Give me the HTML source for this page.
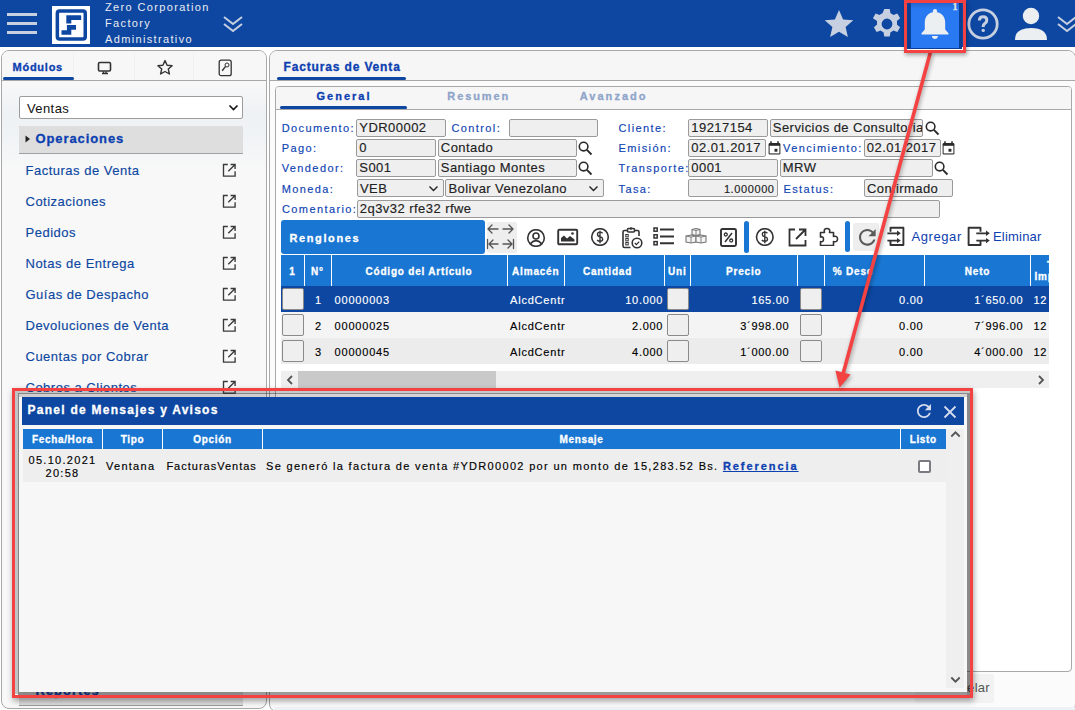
<!DOCTYPE html>
<html><head><meta charset="utf-8">
<style>
*{box-sizing:border-box;margin:0;padding:0}
html,body{width:1075px;height:710px;overflow:hidden;background:#fff;font-family:"Liberation Sans",sans-serif}
.a{position:absolute}
.t{position:absolute;white-space:nowrap;line-height:1}
#hdr{left:0;top:0;width:1075px;height:47px;background:#0d47a1}
.hb{left:7px;width:30px;height:3px;background:#c6d0e0}
.htx{left:105px;color:#e9ecf2;font-size:11px;letter-spacing:1.35px}
#lp{left:1px;top:50px;width:266px;height:659px;background:#f8f8f8;border:1px solid #a8a8a8;border-radius:8px;overflow:hidden}
#rp{left:269px;top:50px;width:807px;height:662px;background:#fbfbfb;border:1px solid #a8a8a8;border-radius:8px;overflow:hidden}
.li{left:25.5px;color:#0d47a1;font-size:13px;letter-spacing:0.5px}
.lbl{color:#0d43b2;font-size:11px;letter-spacing:1.4px}
.inp{position:absolute;background:#efefef;border:1px solid #9a9a9a;border-radius:2px;height:17px}
.itx{position:absolute;white-space:nowrap;line-height:1;color:#222;font-size:13px}
.th{position:absolute;color:#fff;font-weight:bold;font-size:10px;letter-spacing:0.8px;white-space:nowrap;line-height:1;text-align:center}
.td{position:absolute;white-space:nowrap;line-height:1;color:#000;font-size:11px;letter-spacing:0.9px}
.cb{position:absolute;width:22px;height:22px;background:#efefef;border:1px solid #8a8a8a;border-radius:2px}
.td,.itx,.lbl,.li{-webkit-text-stroke:0.15px currentColor}
[style*="font-weight:bold"],.th,b{-webkit-text-stroke:0.3px currentColor}
</style></head><body>
<!-- HEADER -->
<div id="hdr" class="a"></div>
<div class="a hb" style="top:13px"></div>
<div class="a hb" style="top:22px"></div>
<div class="a hb" style="top:31px"></div>
<svg class="a" style="left:52px;top:6px" width="38" height="38" viewBox="0 0 38 38">
<rect x="0" y="0" width="38" height="38" fill="#fff"/>
<rect x="5.35" y="5.05" width="27.9" height="27.9" rx="2.2" fill="none" stroke="#0d47a1" stroke-width="3.5"/>
<path d="M14.3 9.2h14.3q0.6 0 0.6 0.6v3.6q0 0.6-0.6 0.6h-9.3v3.5h-5z" fill="#0d47a1"/>
<path d="M14.9 19h9.1v4.7h-4.7v5.1h-9.8v-4.5h5.4z" fill="#0d47a1"/>
</svg>
<div class="t htx" style="top:2px">Zero Corporation</div>
<div class="t htx" style="top:18px">Factory</div>
<div class="t htx" style="top:34px">Administrativo</div>
<svg class="a" style="left:222px;top:15px" width="22" height="18" viewBox="0 0 22 18"><path d="M2 2l9 7 9-7M2 9l9 7 9-7" fill="none" stroke="#c6d0e0" stroke-width="2"/></svg>

<svg class="a" style="left:823px;top:9px;" width="32" height="29" viewBox="0 0 32 29"><path d="M16 1l4.1 9.4 10.2.9-7.7 6.8 2.3 10-8.9-5.3-8.9 5.3 2.3-10L1.7 11.3l10.2-.9z" fill="#c6d0e0"/></svg>
<svg class="a" style="left:871px;top:8px;" width="32" height="32" viewBox="0 0 32 32"><path d="M13.3 1h5.4l.8 4.2a11 11 0 0 1 2.9 1.7l4-1.4 2.7 4.7-3.2 2.8a11 11 0 0 1 0 3.4l3.2 2.8-2.7 4.7-4-1.4a11 11 0 0 1-2.9 1.7l-.8 4.2h-5.4l-.8-4.2a11 11 0 0 1-2.9-1.7l-4 1.4-2.7-4.7 3.2-2.8a11 11 0 0 1 0-3.4L1.9 10.2l2.7-4.7 4 1.4a11 11 0 0 1 2.9-1.7z M16 10.6a5.4 5.4 0 1 0 0 10.8 5.4 5.4 0 1 0 0-10.8z" fill="#c6d0e0" fill-rule="evenodd"/></svg>
<div class="a" style="left:907px;top:0px;width:55px;height:49px;background:#0b3f94"></div>
<div class="a" style="left:911px;top:3px;width:48px;height:45px;background:linear-gradient(to bottom,#2466d2 0px,#2979f2 6px,#2979f2 100%)"></div>
<svg class="a" style="left:920px;top:8px" width="30" height="32" viewBox="0 0 30 32"><circle cx="15" cy="3.2" r="2.1" fill="#eceff1"/><path d="M15 4C8.8 4 4.8 8.5 4.8 14.5V21.5L1.5 25.3Q0.9 26.5 2.2 26.5H27.8Q29.1 26.5 28.5 25.3L25.2 21.5V14.5C25.2 8.5 21.2 4 15 4Z" fill="#eceff1"/><path d="M11.8 28h6.2q-.5 2.9-3.1 2.9t-3.1-2.9z" fill="#eceff1"/></svg>
<div class="t" style="left:952.5px;top:2.3px;font-family:'Liberation Serif',serif;font-size:10px;font-weight:bold;color:#dfe6e0">1</div>
<svg class="a" style="left:966px;top:7px" width="34" height="34" viewBox="0 0 34 34"><circle cx="17" cy="17" r="14.2" fill="none" stroke="#c6d0e0" stroke-width="2.8"/><path d="M13.4 13.6q0-3.9 3.7-3.9t3.7 3.6q0 2-2 3.3-1.6 1-1.6 2.7v.7" fill="none" stroke="#c6d0e0" stroke-width="3"/><circle cx="17.2" cy="23.4" r="1.7" fill="#c6d0e0"/></svg>
<svg class="a" style="left:1014px;top:7px;" width="34" height="34" viewBox="0 0 34 34"><circle cx="17" cy="9" r="8.2" fill="#eceff1"/><path d="M1 33q0-12 16-12t16 12z" fill="#eceff1"/></svg>
<svg class="a" style="left:1056px;top:15px;" width="20" height="18" viewBox="0 0 20 18"><path d="M2 2l9 7 9-7M2 9l9 7 9-7" fill="none" stroke="#c6d0e0" stroke-width="2"/></svg>
<!-- LEFT PANEL -->
<div id="lp" class="a"></div>
<div class="a" style="left:2px;top:51px;width:264px;height:29px;background:#f7f7f7;border-radius:7px 7px 0 0"></div>
<div class="a" style="left:73px;top:52px;width:1px;height:28px;background:#f0f0f0"></div>
<div class="a" style="left:134px;top:52px;width:1px;height:28px;background:#f0f0f0"></div>
<div class="a" style="left:193px;top:52px;width:1px;height:28px;background:#f0f0f0"></div>
<div class="a" style="left:2px;top:80px;width:264px;height:1px;background:#a8a8a8"></div>
<div class="a" style="left:3px;top:77px;width:71px;height:3px;background:#0d47a1;border-radius:2px"></div>
<div class="t" style="left:12.5px;top:62px;font-size:11px;font-weight:bold;color:#0c40b0;letter-spacing:0.75px">Módulos</div>
<svg class="a" style="left:97px;top:61px" width="16" height="14" viewBox="0 0 16 14"><rect x="1.5" y="1.5" width="12" height="8.5" rx="1.2" fill="none" stroke="#333" stroke-width="1.6"/><path d="M6.5 10.5v1.5M9 10.5v1.5M5 12.5h6" stroke="#333" stroke-width="1.4"/></svg>
<svg class="a" style="left:156px;top:59px" width="18" height="18" viewBox="0 0 18 18"><path d="M9 1.6l2.1 4.6 5 .5-3.8 3.4 1.1 4.9L9 12.5 4.6 15l1.1-4.9L1.9 6.7l5-.5z" fill="none" stroke="#333" stroke-width="1.4" stroke-linejoin="round"/></svg>
<svg class="a" style="left:218px;top:59px" width="15" height="18" viewBox="0 0 15 18"><rect x="1.2" y="1.2" width="12" height="15.5" rx="2" fill="none" stroke="#333" stroke-width="1.3"/><circle cx="9" cy="6" r="2" fill="none" stroke="#333" stroke-width="1"/><path d="M7.6 7.4L4.2 11.8" stroke="#333" stroke-width="1.4"/></svg>
<div class="a" style="left:2px;top:81px;width:264px;height:90px;background:linear-gradient(to bottom,#f8f8f8 0%,#eff2f5 35%,#f0f3f6 60%,#f8f8f8 100%)"></div>
<div class="a" style="left:19px;top:96px;width:224px;height:23px;background:#fff;border:1px solid #9c9c9c;border-radius:2px"></div>
<div class="t" style="left:27px;top:102px;font-size:13px;color:#111;letter-spacing:0.4px">Ventas</div>
<svg class="a" style="left:228px;top:103px" width="11" height="9" viewBox="0 0 11 9"><path d="M1.5 2.5l4 4 4-4" fill="none" stroke="#111" stroke-width="1.6"/></svg>
<div class="a" style="left:19px;top:126px;width:224px;height:28px;background:#dedede;border-bottom:1px solid #a0a0a0"></div>
<svg class="a" style="left:25px;top:135px" width="6" height="8" viewBox="0 0 6 8"><path d="M0.5 0.5L5 4 0.5 7.5z" fill="#222"/></svg>
<div class="t" style="left:35.5px;top:132px;font-size:13px;font-weight:bold;color:#0c40b0;letter-spacing:0.9px">Operaciones</div>
<div class="t li" style="top:164.0px">Facturas de Venta</div>
<svg class="a" style="left:222px;top:163px" width="14" height="14" viewBox="0 0 14 14"><path d="M5.8 1.5H1.5v11.6h11.6V8.2" fill="none" stroke="#3a3a3a" stroke-width="1.35"/><path d="M6.3 8.3L12.6 2M8.6 1.5h4.5V6" fill="none" stroke="#3a3a3a" stroke-width="1.35"/></svg>
<div class="t li" style="top:195.0px">Cotizaciones</div>
<svg class="a" style="left:222px;top:194px" width="14" height="14" viewBox="0 0 14 14"><path d="M5.8 1.5H1.5v11.6h11.6V8.2" fill="none" stroke="#3a3a3a" stroke-width="1.35"/><path d="M6.3 8.3L12.6 2M8.6 1.5h4.5V6" fill="none" stroke="#3a3a3a" stroke-width="1.35"/></svg>
<div class="t li" style="top:226.0px">Pedidos</div>
<svg class="a" style="left:222px;top:225px" width="14" height="14" viewBox="0 0 14 14"><path d="M5.8 1.5H1.5v11.6h11.6V8.2" fill="none" stroke="#3a3a3a" stroke-width="1.35"/><path d="M6.3 8.3L12.6 2M8.6 1.5h4.5V6" fill="none" stroke="#3a3a3a" stroke-width="1.35"/></svg>
<div class="t li" style="top:257.0px">Notas de Entrega</div>
<svg class="a" style="left:222px;top:256px" width="14" height="14" viewBox="0 0 14 14"><path d="M5.8 1.5H1.5v11.6h11.6V8.2" fill="none" stroke="#3a3a3a" stroke-width="1.35"/><path d="M6.3 8.3L12.6 2M8.6 1.5h4.5V6" fill="none" stroke="#3a3a3a" stroke-width="1.35"/></svg>
<div class="t li" style="top:288.0px">Guías de Despacho</div>
<svg class="a" style="left:222px;top:287px" width="14" height="14" viewBox="0 0 14 14"><path d="M5.8 1.5H1.5v11.6h11.6V8.2" fill="none" stroke="#3a3a3a" stroke-width="1.35"/><path d="M6.3 8.3L12.6 2M8.6 1.5h4.5V6" fill="none" stroke="#3a3a3a" stroke-width="1.35"/></svg>
<div class="t li" style="top:319.0px">Devoluciones de Venta</div>
<svg class="a" style="left:222px;top:318px" width="14" height="14" viewBox="0 0 14 14"><path d="M5.8 1.5H1.5v11.6h11.6V8.2" fill="none" stroke="#3a3a3a" stroke-width="1.35"/><path d="M6.3 8.3L12.6 2M8.6 1.5h4.5V6" fill="none" stroke="#3a3a3a" stroke-width="1.35"/></svg>
<div class="t li" style="top:350.0px">Cuentas por Cobrar</div>
<svg class="a" style="left:222px;top:349px" width="14" height="14" viewBox="0 0 14 14"><path d="M5.8 1.5H1.5v11.6h11.6V8.2" fill="none" stroke="#3a3a3a" stroke-width="1.35"/><path d="M6.3 8.3L12.6 2M8.6 1.5h4.5V6" fill="none" stroke="#3a3a3a" stroke-width="1.35"/></svg>
<div class="t li" style="top:381.0px">Cobros a Clientes</div>
<svg class="a" style="left:222px;top:380px" width="14" height="14" viewBox="0 0 14 14"><path d="M5.8 1.5H1.5v11.6h11.6V8.2" fill="none" stroke="#3a3a3a" stroke-width="1.35"/><path d="M6.3 8.3L12.6 2M8.6 1.5h4.5V6" fill="none" stroke="#3a3a3a" stroke-width="1.35"/></svg>
<div class="a" style="left:19px;top:676px;width:224px;height:30px;background:#dedede;border-bottom:1px solid #9c9c9c"></div>
<svg class="a" style="left:25px;top:685px" width="6" height="8" viewBox="0 0 6 8"><path d="M0.5 0.5L5 4 0.5 7.5z" fill="#222"/></svg>
<div class="t" style="left:35.5px;top:683.5px;font-size:13px;font-weight:bold;color:#0c40b0;letter-spacing:1.0px">Reportes</div>

<!-- RIGHT PANEL -->
<div id="rp" class="a"></div>
<div class="a" style="left:274px;top:707px;width:801px;height:3px;background:#eef1f5"></div>
<div class="a" style="left:270px;top:51px;width:805px;height:29px;background:#f6f6f6;border-radius:7px 7px 0 0"></div>
<div class="a" style="left:270px;top:80px;width:805px;height:1px;background:#a8a8a8"></div>
<div class="t" style="left:283.5px;top:60.84px;font-size:12px;font-weight:bold;color:#0c40b0;letter-spacing:0.85px">Facturas de Venta</div>
<div class="a" style="left:277px;top:77px;width:129px;height:3px;background:#0d47a1;border-radius:2px"></div>
<div class="a" style="left:275px;top:86px;width:797px;height:586px;background:#fff;border:1px solid #a8a8a8;border-radius:4px"></div>
<div class="a" style="left:276px;top:87px;width:795px;height:22px;background:#f6f6f6;border-radius:3px 3px 0 0"></div>
<div class="a" style="left:276px;top:109px;width:795px;height:1px;background:#a8a8a8"></div>
<div class="t" style="left:316.5px;top:91.49px;font-size:11px;font-weight:bold;color:#0c40b0;letter-spacing:2px">General</div>
<div class="a" style="left:280px;top:106px;width:127px;height:3px;background:#0d47a1;border-radius:2px"></div>
<div class="t" style="left:447.3px;top:91.49px;font-size:11px;font-weight:bold;color:#8fa4c9;letter-spacing:1.9px">Resumen</div>
<div class="t" style="left:579.7px;top:91.49px;font-size:11px;font-weight:bold;color:#8fa4c9;letter-spacing:2.05px">Avanzado</div>
<div class="t lbl" style="left:281.7px;top:122.69px">Documento:</div>
<div class="t lbl" style="left:281.7px;top:142.69px">Pago:</div>
<div class="t lbl" style="left:281.7px;top:162.69px">Vendedor:</div>
<div class="t lbl" style="left:281.7px;top:183.69px">Moneda:</div>
<div class="t lbl" style="left:282px;top:203.69px">Comentario:</div>
<div class="t lbl" style="left:451.4px;top:122.69px">Control:</div>
<div class="t lbl" style="left:618.5px;top:122.69px">Cliente:</div>
<div class="t lbl" style="left:618.5px;top:142.69px">Emisión:</div>
<div class="t lbl" style="left:618.5px;top:162.69px">Transporte:</div>
<div class="t lbl" style="left:618.5px;top:183.69px">Tasa:</div>
<div class="t lbl" style="left:783px;top:142.69px">Vencimiento:</div>
<div class="t lbl" style="left:783.4px;top:183.69px">Estatus:</div>
<div class="inp" style="left:356px;top:119px;width:90px;height:18px"></div>
<div class="itx" style="left:359.3px;top:120.8px;letter-spacing:0.45px">YDR00002</div>
<div class="inp" style="left:508.5px;top:119px;width:89.5px;height:18px"></div>
<div class="inp" style="left:688px;top:119px;width:80px;height:18px"></div>
<div class="itx" style="left:691.3px;top:120.8px;letter-spacing:0.45px">19217154</div>
<div class="inp" style="left:769.5px;top:119px;width:153.0px;height:18px"></div>
<div class="a" style="left:770.5px;top:118px;width:151px;height:18px;overflow:hidden"><div class="itx" style="left:2.3px;top:2.8px;letter-spacing:0.45px">Servicios de Consultoria</div></div>
<div class="inp" style="left:356px;top:139px;width:79.5px;height:18px"></div>
<div class="itx" style="left:359.3px;top:140.8px;letter-spacing:0.45px">0</div>
<div class="inp" style="left:437.5px;top:139px;width:139.0px;height:18px"></div>
<div class="itx" style="left:440.8px;top:140.8px;letter-spacing:0.45px">Contado</div>
<div class="inp" style="left:688px;top:139px;width:78px;height:18px"></div>
<div class="itx" style="left:691.3px;top:140.8px;letter-spacing:0.45px">02.01.2017</div>
<div class="inp" style="left:863.5px;top:139px;width:77.0px;height:18px"></div>
<div class="itx" style="left:866.8px;top:140.8px;letter-spacing:0.45px">02.01.2017</div>
<div class="inp" style="left:356px;top:159px;width:79.5px;height:18px"></div>
<div class="itx" style="left:359.3px;top:160.8px;letter-spacing:0.45px">S001</div>
<div class="inp" style="left:437.5px;top:159px;width:139.0px;height:18px"></div>
<div class="itx" style="left:440.8px;top:160.8px;letter-spacing:0.45px">Santiago Montes</div>
<div class="inp" style="left:688px;top:159px;width:89.5px;height:18px"></div>
<div class="itx" style="left:691.3px;top:160.8px;letter-spacing:0.45px">0001</div>
<div class="inp" style="left:779.5px;top:159px;width:153.0px;height:18px"></div>
<div class="itx" style="left:782.8px;top:160.8px;letter-spacing:0.45px">MRW</div>
<div class="inp" style="left:356.5px;top:179px;width:87.0px;height:18px"></div>
<div class="itx" style="left:360.0px;top:181.5px;letter-spacing:0.4px">VEB</div>
<div class="inp" style="left:445px;top:179px;width:158.5px;height:18px"></div>
<div class="itx" style="left:448.5px;top:181.5px;letter-spacing:0.4px">Bolivar Venezolano</div>
<div class="inp" style="left:688px;top:179px;width:89.5px;height:18px"></div>
<div class="itx" style="left:723.9px;top:183.69px;font-size:11px;letter-spacing:0.6px">1.000000</div>
<div class="inp" style="left:863.5px;top:179px;width:89.0px;height:18px"></div>
<div class="itx" style="left:867.0px;top:181.5px;letter-spacing:0.4px">Confirmado</div>
<div class="inp" style="left:356.5px;top:200px;width:583.5px;height:18px"></div>
<div class="itx" style="left:359.8px;top:201.8px;letter-spacing:0.45px">2q3v32 rfe32 rfwe</div>
<svg class="a" style="left:428px;top:184px" width="11" height="9" viewBox="0 0 11 9"><path d="M1.5 2.5l4 4 4-4" fill="none" stroke="#222" stroke-width="1.4"/></svg>
<svg class="a" style="left:588px;top:184px" width="11" height="9" viewBox="0 0 11 9"><path d="M1.5 2.5l4 4 4-4" fill="none" stroke="#222" stroke-width="1.4"/></svg>
<svg class="a" style="left:925px;top:120.5px" width="15" height="15" viewBox="0 0 15 15"><circle cx="5.6" cy="5.6" r="4.3" fill="none" stroke="#2a2a2a" stroke-width="1.6"/><path d="M8.9 8.9l4.6 4.6" stroke="#2a2a2a" stroke-width="1.9"/></svg>
<svg class="a" style="left:578.4px;top:140.5px" width="15" height="15" viewBox="0 0 15 15"><circle cx="5.6" cy="5.6" r="4.3" fill="none" stroke="#2a2a2a" stroke-width="1.6"/><path d="M8.9 8.9l4.6 4.6" stroke="#2a2a2a" stroke-width="1.9"/></svg>
<svg class="a" style="left:578.4px;top:160.5px" width="15" height="15" viewBox="0 0 15 15"><circle cx="5.6" cy="5.6" r="4.3" fill="none" stroke="#2a2a2a" stroke-width="1.6"/><path d="M8.9 8.9l4.6 4.6" stroke="#2a2a2a" stroke-width="1.9"/></svg>
<svg class="a" style="left:934.3px;top:160.5px" width="15" height="15" viewBox="0 0 15 15"><circle cx="5.6" cy="5.6" r="4.3" fill="none" stroke="#2a2a2a" stroke-width="1.6"/><path d="M8.9 8.9l4.6 4.6" stroke="#2a2a2a" stroke-width="1.9"/></svg>
<svg class="a" style="left:767.5px;top:141px" width="13" height="14" viewBox="0 0 13 14"><rect x="0.6" y="1.9" width="11.8" height="11.7" rx="1.3" fill="#2a2a2a"/><rect x="1.6" y="4.8" width="9.8" height="7.6" fill="#fff"/><rect x="6.5" y="7.8" width="2.9" height="2.9" fill="#2a2a2a"/><path d="M3 0.2v2.4M10 0.2v2.4" stroke="#2a2a2a" stroke-width="1.5"/></svg>
<svg class="a" style="left:941.7px;top:141px" width="13" height="14" viewBox="0 0 13 14"><rect x="0.6" y="1.9" width="11.8" height="11.7" rx="1.3" fill="#2a2a2a"/><rect x="1.6" y="4.8" width="9.8" height="7.6" fill="#fff"/><rect x="6.5" y="7.8" width="2.9" height="2.9" fill="#2a2a2a"/><path d="M3 0.2v2.4M10 0.2v2.4" stroke="#2a2a2a" stroke-width="1.5"/></svg>

<div class="a" style="left:281px;top:220px;width:204px;height:34px;background:#1976d2;border-radius:3px"></div>
<div class="t" style="left:289.5px;top:232.69px;font-size:11px;font-weight:bold;color:#fff;letter-spacing:1.6px">Renglones</div>
<div class="a" style="left:486.5px;top:221.5px;width:30.5px;height:31px;background:#eeeeee;border-radius:2px"></div>
<svg class="a" style="left:486px;top:222px" width="32" height="30" viewBox="0 0 32 30">
<g fill="none" stroke="#555" stroke-width="1.3" stroke-linecap="round" stroke-linejoin="round">
<path d="M12 7H2M6 3L2 7l4 4"/><path d="M17 7h10M23 3l4 4-4 4"/>
<path d="M12 22H3M7 18l-4 4 4 4M1.5 17.5v9"/><path d="M17 22h9M22 18l4 4-4 4M27.5 17.5v9"/>
</g></svg>
<svg class="a" style="left:526px;top:228.5px" width="20" height="18" viewBox="0 0 20 18"><circle cx="10" cy="9" r="8.3" fill="none" stroke="#333" stroke-width="1.6"/><circle cx="10" cy="7" r="3" fill="none" stroke="#333" stroke-width="1.6"/><path d="M4.4 14.6q5.6-6 11.2 0" fill="none" stroke="#333" stroke-width="1.6"/></svg>
<svg class="a" style="left:557px;top:228px" width="22" height="18" viewBox="0 0 22 18"><rect x="1.2" y="1.8" width="19" height="14.5" rx="1" fill="none" stroke="#333" stroke-width="1.9"/><path d="M4 13.5v-3.5l3-2.5 3 3 3-2.5 4.5 3.5v2z" fill="#333"/><circle cx="15.5" cy="5.5" r="1.3" fill="#333"/></svg>
<svg class="a" style="left:590px;top:228px" width="20" height="18" viewBox="0 0 20 18"><circle cx="10" cy="9" r="8.3" fill="none" stroke="#333" stroke-width="1.6"/><path d="M12.6 5.2q-1-1.1-2.6-1.1q-2.5 0-2.5 2.1t2.5 2.5 2.7 2.3q0 2.3-2.7 2.3q-1.8 0-2.9-1.3M10 2.8v12.4" fill="none" stroke="#333" stroke-width="1.4"/></svg>
<svg class="a" style="left:621px;top:225.5px" width="22" height="23" viewBox="0 0 22 23"><path d="M6 4.5H3.5q-1.5 0-1.5 1.5v14q0 1.5 1.5 1.5h6M14 4.5h2.5q1.5 0 1.5 1.5v4" fill="none" stroke="#333" stroke-width="1.6"/><rect x="6.5" y="2.5" width="7" height="3.5" rx="1" fill="none" stroke="#333" stroke-width="1.6"/><circle cx="10" cy="2.5" r="1.2" fill="#333"/><rect x="4.8" y="8.5" width="2.4" height="2.4" fill="none" stroke="#333" stroke-width="1"/><rect x="4.8" y="12.5" width="2.4" height="2.4" fill="none" stroke="#333" stroke-width="1"/><rect x="4.8" y="16.5" width="2.4" height="2.4" fill="none" stroke="#333" stroke-width="1"/><circle cx="16" cy="17" r="4.8" fill="none" stroke="#333" stroke-width="1.6"/><path d="M13.8 17l1.6 1.6 2.8-3" fill="none" stroke="#333" stroke-width="1.3"/></svg>
<svg class="a" style="left:653px;top:227px" width="22" height="19" viewBox="0 0 22 19"><g fill="none" stroke="#333" stroke-width="1.5"><rect x="1" y="1" width="3.2" height="3.2"/><rect x="1" y="7.8" width="3.2" height="3.2"/><rect x="1" y="14.6" width="3.2" height="3.2"/></g><path d="M7 2.6h14M7 9.4h14M7 16.2h14" stroke="#333" stroke-width="2"/></svg>
<svg class="a" style="left:685px;top:227.5px" width="22" height="17" viewBox="0 0 22 17"><g fill="#f4f4f4" stroke="#777" stroke-width="1.1"><path d="M7 1.5l4-1 4 1v5l-4 1-4-1z"/><path d="M1 8l5-1 5 1v6l-5 1-5-1z"/><path d="M11 8l5-1 5 1v6l-5 1-5-1z"/></g><path d="M7 1.5l4 1 4-1M11 2.5v5M1 8l5 1 5-1M6 9v6M11 8l5 1 5-1M16 9v6" fill="none" stroke="#777" stroke-width="0.9"/></svg>
<svg class="a" style="left:719.5px;top:227.5px" width="17" height="19" viewBox="0 0 17 19"><rect x="1" y="1" width="15" height="17" rx="1.5" fill="none" stroke="#333" stroke-width="1.9"/><circle cx="5.8" cy="6.5" r="1.5" fill="none" stroke="#333" stroke-width="1.3"/><circle cx="11.2" cy="12.5" r="1.5" fill="none" stroke="#333" stroke-width="1.3"/><path d="M12 5L5 14" stroke="#333" stroke-width="1.5"/></svg>
<div class="a" style="left:744px;top:221px;width:5px;height:32px;background:#1976d2;border-radius:2.5px"></div>
<svg class="a" style="left:755px;top:228px" width="20" height="18" viewBox="0 0 20 18"><circle cx="9.8" cy="9" r="8.3" fill="none" stroke="#333" stroke-width="1.6"/><path d="M12.4 5.2q-1-1.1-2.6-1.1q-2.5 0-2.5 2.1t2.5 2.5 2.7 2.3q0 2.3-2.7 2.3q-1.8 0-2.9-1.3M9.8 2.8v12.4" fill="none" stroke="#333" stroke-width="1.4"/></svg>
<svg class="a" style="left:788px;top:227.5px" width="19" height="19" viewBox="0 0 19 19"><path d="M7 1.5H1.5v16h16V12" fill="none" stroke="#333" stroke-width="1.8"/><path d="M8 11L17 2M11 1.5h6.5V8" fill="none" stroke="#333" stroke-width="1.8"/></svg>
<svg class="a" style="left:819px;top:226.5px" width="20" height="19" viewBox="0 0 20 19"><path d="M1.5 5.5h4q-1-4 2.5-4t2.5 4h4v4q4-1 4 2.5t-4 2.5v4h-13v-4q3 1 3-2.2t-3-2.2z" fill="none" stroke="#333" stroke-width="1.6" stroke-linejoin="round"/></svg>
<div class="a" style="left:845px;top:221px;width:5px;height:31px;background:#1976d2;border-radius:2.5px"></div>
<div class="a" style="left:853px;top:222.5px;width:25.5px;height:28px;background:#eeeeee;border-radius:2px"></div>
<svg class="a" style="left:859px;top:228.5px" width="17" height="17" viewBox="4 4 16.3 16.3"><path d="M17.65 6.35C16.2 4.9 14.21 4 12 4c-4.42 0-7.99 3.58-7.99 8s3.57 8 7.99 8c3.73 0 6.84-2.55 7.73-6h-2.08c-.82 2.33-3.04 4-5.65 4-3.31 0-6-2.69-6-6s2.69-6 6-6c1.66 0 3.14.69 4.22 1.78L13 11h7V4l-2.35 2.35z" fill="#5a5a5a"/></svg>
<svg class="a" style="left:886px;top:226px" width="20" height="21" viewBox="0 0 20 21"><path d="M4.5 5.8V1.8h12.9v17.2H4.5v-4" fill="none" stroke="#333" stroke-width="1.9" stroke-linejoin="round"/><path d="M1.4 7.3h10.5M1.4 14.6h10.5" stroke="#333" stroke-width="1.8"/><path d="M11 4.6l3.8 2.7-3.8 2.7zM11 11.9l3.8 2.7-3.8 2.7z" fill="#333"/></svg>
<div class="t" style="left:911.4px;top:230.1px;font-size:13px;color:#0c40b0;letter-spacing:0.6px">Agregar</div>
<svg class="a" style="left:967px;top:226px" width="24" height="21" viewBox="0 0 24 21"><path d="M13.5 5.8V1.8H1.6v17.2h11.9v-4" fill="none" stroke="#333" stroke-width="1.9" stroke-linejoin="round"/><path d="M9.3 7.3h10.5M9.3 14.6h10.5" stroke="#333" stroke-width="1.8"/><path d="M19 4.6l3.8 2.7-3.8 2.7zM19 11.9l3.8 2.7-3.8 2.7z" fill="#333"/></svg>
<div class="t" style="left:993px;top:230.1px;font-size:13px;color:#0c40b0;letter-spacing:0.2px">Eliminar</div>
<div class="a" style="left:281px;top:255px;width:768px;height:31px;background:#1976d2"></div>
<div class="a" style="left:303.5px;top:255px;width:1px;height:31px;background:#fff"></div>
<div class="a" style="left:330.5px;top:255px;width:1px;height:31px;background:#fff"></div>
<div class="a" style="left:506.5px;top:255px;width:1px;height:31px;background:#fff"></div>
<div class="a" style="left:564.0px;top:255px;width:1px;height:31px;background:#fff"></div>
<div class="a" style="left:664.0px;top:255px;width:1px;height:31px;background:#fff"></div>
<div class="a" style="left:689.5px;top:255px;width:1px;height:31px;background:#fff"></div>
<div class="a" style="left:797.0px;top:255px;width:1px;height:31px;background:#fff"></div>
<div class="a" style="left:823.5px;top:255px;width:1px;height:31px;background:#fff"></div>
<div class="a" style="left:924.0px;top:255px;width:1px;height:31px;background:#fff"></div>
<div class="a" style="left:1030.0px;top:255px;width:1px;height:31px;background:#fff"></div>
<div class="th" style="left:281px;width:23px;top:266.54px">1</div>
<div class="th" style="left:304px;width:27px;top:266.54px">N°</div>
<div class="th" style="left:331px;width:176px;top:266.54px">Código del Artículo</div>
<div class="th" style="left:507px;width:57.5px;top:266.54px">Almacén</div>
<div class="th" style="left:564.5px;width:86px;top:266.54px">Cantidad</div>
<div class="th" style="left:664.5px;width:25.5px;top:266.54px">Uni</div>
<div class="th" style="left:690px;width:107.5px;top:266.54px">Precio</div>
<div class="th" style="left:832.8px;top:266.54px;text-align:left">% Desc</div>
<div class="th" style="left:924.5px;width:106px;top:266.54px">Neto</div>
<div class="a" style="left:1031px;top:255px;width:18px;height:31px;overflow:hidden"><div class="th" style="left:16px;top:5.5px;text-align:left;letter-spacing:0.5px">Tasa</div><div class="th" style="left:3.5px;top:16.5px;text-align:left;letter-spacing:0.8px">Imp</div></div>
<div class="a" style="left:281px;top:286px;width:768px;height:25.69999999999999px;background:#0d47a1"></div>
<div class="cb" style="left:282.3px;top:288px"></div>
<div class="cb" style="left:667.3px;top:288px"></div>
<div class="cb" style="left:800px;top:288px"></div>
<div class="td" style="color:#fff;left:304px;width:17px;text-align:right;letter-spacing:0;top:295px">1</div>
<div class="td" style="color:#fff;left:334.6px;top:295px;letter-spacing:0.8px">00000003</div>
<div class="a" style="left:508px;top:286px;width:56.5px;height:25.7px;overflow:hidden"><div class="td" style="color:#fff;left:2px;top:9px;letter-spacing:0.8px">AlcdCentr</div></div>
<div class="td" style="color:#fff;right:411.90000000000003px;top:295px;text-align:right;letter-spacing:0.7px">10.000</div>
<div class="td" style="color:#fff;right:285.7px;top:295px;text-align:right;letter-spacing:0.7px">165.00</div>
<div class="td" style="color:#fff;right:151.7px;top:295px;text-align:right;letter-spacing:0.7px">0.00</div>
<div class="td" style="color:#fff;right:51.699999999999974px;top:295px;text-align:right;letter-spacing:0.7px">1´650.00</div>
<div class="td" style="color:#fff;left:1033.6px;top:295px;letter-spacing:0.6px">12</div>
<div class="a" style="left:281px;top:311.7px;width:768px;height:26.100000000000023px;background:#f4f4f4"></div>
<div class="cb" style="left:282.3px;top:314px"></div>
<div class="cb" style="left:667.3px;top:314px"></div>
<div class="cb" style="left:800px;top:314px"></div>
<div class="td" style="color:#000;left:304px;width:17px;text-align:right;letter-spacing:0;top:321px">2</div>
<div class="td" style="color:#000;left:334.6px;top:321px;letter-spacing:0.8px">00000025</div>
<div class="a" style="left:508px;top:311.7px;width:56.5px;height:26.1px;overflow:hidden"><div class="td" style="color:#000;left:2px;top:9.3px;letter-spacing:0.8px">AlcdCentr</div></div>
<div class="td" style="color:#000;right:411.90000000000003px;top:321px;text-align:right;letter-spacing:0.7px">2.000</div>
<div class="td" style="color:#000;right:285.7px;top:321px;text-align:right;letter-spacing:0.7px">3´998.00</div>
<div class="td" style="color:#000;right:151.7px;top:321px;text-align:right;letter-spacing:0.7px">0.00</div>
<div class="td" style="color:#000;right:51.699999999999974px;top:321px;text-align:right;letter-spacing:0.7px">7´996.00</div>
<div class="td" style="color:#000;left:1033.6px;top:321px;letter-spacing:0.6px">12</div>
<div class="a" style="left:281px;top:337.8px;width:768px;height:26.19999999999999px;background:#ececec"></div>
<div class="cb" style="left:282.3px;top:340px"></div>
<div class="cb" style="left:667.3px;top:340px"></div>
<div class="cb" style="left:800px;top:340px"></div>
<div class="td" style="color:#000;left:304px;width:17px;text-align:right;letter-spacing:0;top:347px">3</div>
<div class="td" style="color:#000;left:334.6px;top:347px;letter-spacing:0.8px">00000045</div>
<div class="a" style="left:508px;top:337.8px;width:56.5px;height:26.2px;overflow:hidden"><div class="td" style="color:#000;left:2px;top:9.2px;letter-spacing:0.8px">AlcdCentr</div></div>
<div class="td" style="color:#000;right:411.90000000000003px;top:347px;text-align:right;letter-spacing:0.7px">4.000</div>
<div class="td" style="color:#000;right:285.7px;top:347px;text-align:right;letter-spacing:0.7px">1´000.00</div>
<div class="td" style="color:#000;right:151.7px;top:347px;text-align:right;letter-spacing:0.7px">0.00</div>
<div class="td" style="color:#000;right:51.699999999999974px;top:347px;text-align:right;letter-spacing:0.7px">4´000.00</div>
<div class="td" style="color:#000;left:1033.6px;top:347px;letter-spacing:0.6px">12</div>
<div class="a" style="left:281px;top:371px;width:768px;height:17px;background:#efefef"></div>
<div class="a" style="left:297.7px;top:371px;width:198px;height:17px;background:#c9c9c9"></div>
<svg class="a" style="left:285px;top:375px" width="10" height="10" viewBox="0 0 10 10"><path d="M7 1L3 5l4 4" fill="none" stroke="#555" stroke-width="1.8"/></svg>
<svg class="a" style="left:1036px;top:375px" width="10" height="10" viewBox="0 0 10 10"><path d="M3 1l4 4-4 4" fill="none" stroke="#555" stroke-width="1.8"/></svg>
<div class="a" style="left:915px;top:673.5px;width:79px;height:29px;background:#f2f2f2;border-radius:2px"></div>
<div class="t" style="right:85px;top:681.3px;font-size:13px;color:#555;letter-spacing:0.3px">Cancelar</div>
<div class="a" style="left:12px;top:388px;width:961px;height:309.5px;border:3px solid #f44141;box-shadow:1px 3px 6px rgba(0,0,0,0.36)"></div>
<div class="a" style="left:15px;top:391px;width:954.5px;height:2.2px;background:rgba(40,55,55,0.27)"></div>
<div class="a" style="left:15px;top:393.2px;width:3px;height:301.3px;background:rgba(40,55,55,0.27)"></div>
<div class="a" style="left:18px;top:393.2px;width:951.5px;height:0.8px;background:rgba(0,0,0,0.46)"></div>
<div class="a" style="left:18px;top:394px;width:1px;height:300.5px;background:rgba(0,0,0,0.46)"></div>
<div class="a" style="left:967px;top:394px;width:2.5px;height:300.5px;background:rgba(0,0,0,0.46)"></div>
<div class="a" style="left:19px;top:692px;width:948px;height:2.5px;background:rgba(0,0,0,0.38)"></div>
<div class="a" style="left:19px;top:394px;width:948px;height:3px;background:rgba(0,0,0,0.17)"></div>
<div class="a" style="left:19px;top:397px;width:948px;height:295px;background:#f7f7f7"></div>
<div class="a" style="left:22px;top:397px;width:942px;height:28px;background:#0d47a1"></div>
<div class="t" style="left:27.6px;top:403.84px;font-size:12px;font-weight:bold;color:#fff;letter-spacing:1.25px">Panel de Mensajes y Avisos</div>
<svg class="a" style="left:917px;top:404px" width="14" height="14" viewBox="4 4 16 16"><path d="M17.65 6.35C16.2 4.9 14.21 4 12 4c-4.42 0-7.99 3.58-7.99 8s3.57 8 7.99 8c3.73 0 6.84-2.55 7.73-6h-2.08c-.82 2.33-3.04 4-5.65 4-3.31 0-6-2.69-6-6s2.69-6 6-6c1.66 0 3.14.69 4.22 1.78L13 11h7V4l-2.35 2.35z" fill="#d5dced"/></svg>
<svg class="a" style="left:943px;top:404.5px" width="14" height="14" viewBox="0 0 14 14"><path d="M1.5 1.5l11 11M12.5 1.5l-11 11" stroke="#d5dced" stroke-width="1.8"/></svg>
<div class="a" style="left:23px;top:429px;width:923px;height:20px;background:#1976d2"></div>
<div class="a" style="left:102.0px;top:429px;width:1px;height:20px;background:#fff"></div>
<div class="a" style="left:162.0px;top:429px;width:1px;height:20px;background:#fff"></div>
<div class="a" style="left:262.0px;top:429px;width:1px;height:20px;background:#fff"></div>
<div class="a" style="left:900.0px;top:429px;width:1px;height:20px;background:#fff"></div>
<div class="th" style="left:23px;width:79px;top:435.24px;letter-spacing:0.65px">Fecha/Hora</div>
<div class="th" style="left:102.5px;width:60.0px;top:435.24px;letter-spacing:0.65px">Tipo</div>
<div class="th" style="left:162.5px;width:100.0px;top:435.24px;letter-spacing:0.65px">Opción</div>
<div class="th" style="left:262.5px;width:638.0px;top:435.24px;letter-spacing:0.65px">Mensaje</div>
<div class="th" style="left:900.5px;width:45.5px;top:435.24px;letter-spacing:0.65px">Listo</div>
<div class="a" style="left:23px;top:449px;width:923px;height:33px;background:#eeeeee"></div>
<div class="td" style="left:23px;width:79px;text-align:center;top:455.29px;letter-spacing:1.3px">05.10.2021</div>
<div class="td" style="left:23px;width:79px;text-align:center;top:467.99px;letter-spacing:1.3px">20:58</div>
<div class="td" style="left:106px;top:461.49px;letter-spacing:1.27px">Ventana</div>
<div class="td" style="left:166.4px;top:461.49px;letter-spacing:1.0px">FacturasVentas</div>
<div class="td" style="left:266px;top:461.49px;letter-spacing:1.32px">Se generó la factura de venta #YDR00002 por un monto de 15,283.52 Bs. <b style="color:#0c40b0;text-decoration:underline;letter-spacing:1.95px">Referencia</b></div>
<div class="a" style="left:917.5px;top:459.5px;width:13.5px;height:13.5px;background:#fff;border:2px solid #7a7a80;border-radius:2px"></div>
<div class="a" style="left:946px;top:429px;width:18px;height:259px;background:#efefef"></div>
<svg class="a" style="left:949.5px;top:430px" width="11" height="8" viewBox="0 0 11 8"><path d="M1.3 6.5l4.2-4.2 4.2 4.2" fill="none" stroke="#555" stroke-width="1.8"/></svg>
<svg class="a" style="left:949.5px;top:676px" width="11" height="8" viewBox="0 0 11 8"><path d="M1.3 1.5l4.2 4.2 4.2-4.2" fill="none" stroke="#555" stroke-width="1.8"/></svg>
<svg class="a" style="left:0;top:0;filter:drop-shadow(1px 2px 2px rgba(0,0,0,0.35))" width="1075" height="710" viewBox="0 0 1075 710"><path d="M930.5 52L842.5 376" stroke="#f44141" stroke-width="3.6"/><path d="M839.6 387.8L835.4 370.6 850.6 374.6z" fill="#f44141"/></svg>
<div class="a" style="left:904px;top:0px;width:62px;height:53px;border:3px solid #f44141;box-shadow:1px 2px 4px rgba(0,0,0,0.35)"></div>
</body></html>
